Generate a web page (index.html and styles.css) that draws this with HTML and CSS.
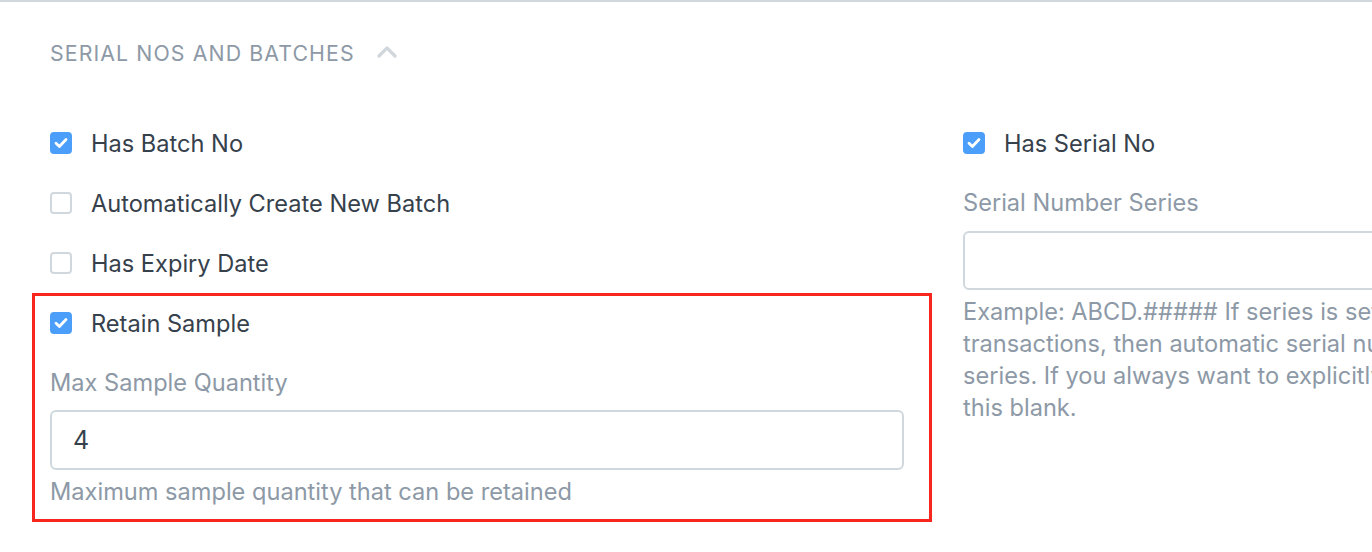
FILE: index.html
```html
<!DOCTYPE html>
<html>
<head>
<meta charset="utf-8">
<link rel="stylesheet" href="styles.css">
</head>
<body>
<div class="page">
  <div class="section-head">
    <span class="section-title">SERIAL NOS AND BATCHES</span>
    <svg class="chevron" width="20" height="14" viewBox="0 0 20 14"><path d="M2 11 L10 3 L18 11" fill="none" stroke="#d1d8dd" stroke-width="3.2" stroke-linecap="round" stroke-linejoin="round"/></svg>
  </div>
  <div class="columns">
    <div class="col">
      <div class="check-row"><span class="box checked"><svg width="16" height="14" viewBox="0 0 16 14"><path d="M3 7.2 L6.4 10.4 L13 3.6" fill="none" stroke="#fff" stroke-width="2.8" stroke-linecap="round" stroke-linejoin="round"/></svg></span><span class="check-label">Has Batch No</span></div>
      <div class="check-row"><span class="box"></span><span class="check-label">Automatically Create New Batch</span></div>
      <div class="check-row"><span class="box"></span><span class="check-label">Has Expiry Date</span></div>
      <div class="highlight-wrap">
        <div class="check-row"><span class="box checked"><svg width="16" height="14" viewBox="0 0 16 14"><path d="M3 7.2 L6.4 10.4 L13 3.6" fill="none" stroke="#fff" stroke-width="2.8" stroke-linecap="round" stroke-linejoin="round"/></svg></span><span class="check-label">Retain Sample</span></div>
        <div class="field">
          <div class="field-label">Max Sample Quantity</div>
          <div class="input">4</div>
          <div class="help">Maximum sample quantity that can be retained</div>
        </div>
        <div class="highlight"></div>
      </div>
    </div>
    <div class="col">
      <div class="check-row"><span class="box checked"><svg width="16" height="14" viewBox="0 0 16 14"><path d="M3 7.2 L6.4 10.4 L13 3.6" fill="none" stroke="#fff" stroke-width="2.8" stroke-linecap="round" stroke-linejoin="round"/></svg></span><span class="check-label">Has Serial No</span></div>
      <div class="field">
        <div class="field-label">Serial Number Series</div>
        <div class="input input-tall"></div>
        <div class="help help-wide">Example: ABCD.##### If series is set and Serial No is not mentioned in<br>transactions, then automatic serial number will be created based on this<br>series. If you always want to explicitly mention Serial Nos for this item. leave<br>this blank.</div>
      </div>
    </div>
  </div>
</div>
</body>
</html>
```

FILE: styles.css
```css
html, body {
  margin: 0;
  padding: 0;
  background: #fff;
  overflow: hidden;
}
body {
  width: 1372px;
  height: 552px;
  font-family: "Inter", "Liberation Sans", sans-serif;
  color: #36414c;
}
.page {
  width: 1900px;
  border-top: 2px solid #d1d8dd;
}
.section-head {
  display: flex;
  align-items: center;
  height: 104px;
  padding-left: 50px;
  box-sizing: border-box;
  padding-bottom: 2px;
}
.section-title {
  font-size: 21.3px;
  letter-spacing: 1.1px;
  color: #8d99a6;
  font-weight: 400;
}
.chevron {
  margin-left: 22px;
  margin-top: -2px;
}
.columns {
  display: flex;
  padding-top: 7px;
  padding-left: 20px;
}
.col {
  width: 914px;
  padding: 0 30px;
  box-sizing: border-box;
  flex: none;
}
.col + .col {
  margin-left: -1px;
}
.check-row {
  display: flex;
  align-items: center;
  height: 60px;
}
.box {
  width: 22px;
  height: 22px;
  box-sizing: border-box;
  border: 2px solid #d1d8dd;
  border-radius: 4px;
  display: flex;
  align-items: center;
  justify-content: center;
  flex: none;
}
.box.checked {
  background: #4b9ef9;
  border-color: #4b9ef9;
}
.check-label {
  margin-left: 19px;
  font-size: 23.6px;
  color: #36414c;
}
.field {
  padding-top: 14px;
}
.field-label {
  font-size: 23.6px;
  line-height: 32px;
  color: #8d99a6;
}
.input {
  margin-top: 11px;
  height: 60px;
  box-sizing: border-box;
  border: 2px solid #d1d8dd;
  border-radius: 6px;
  padding-left: 21px;
  display: flex;
  align-items: center;
  font-size: 25px;
  color: #36414c;
}
.input-tall {
  margin-top: 12px;
  height: 59px;
}
.help {
  margin-top: 6px;
  font-size: 23.6px;
  line-height: 32px;
  color: #8d99a6;
}
.help-wide {
  white-space: nowrap;
}
.highlight-wrap {
  position: relative;
}
.highlight {
  position: absolute;
  left: -18px;
  right: -28px;
  top: 0;
  bottom: -14px;
  border: 3px solid #f8271d;
  pointer-events: none;
}
```
